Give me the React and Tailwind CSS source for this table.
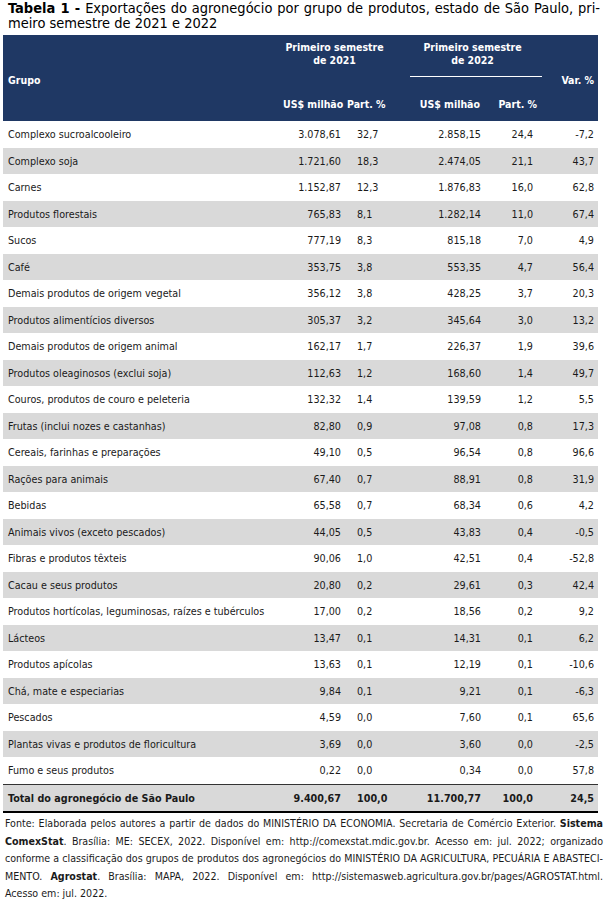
import React from 'react';

const rows = [
  ['Complexo sucroalcooleiro', '3.078,61', '32,7', '2.858,15', '24,4', '-7,2'],
  ['Complexo soja', '1.721,60', '18,3', '2.474,05', '21,1', '43,7'],
  ['Carnes', '1.152,87', '12,3', '1.876,83', '16,0', '62,8'],
  ['Produtos florestais', '765,83', '8,1', '1.282,14', '11,0', '67,4'],
  ['Sucos', '777,19', '8,3', '815,18', '7,0', '4,9'],
  ['Café', '353,75', '3,8', '553,35', '4,7', '56,4'],
  ['Demais produtos de origem vegetal', '356,12', '3,8', '428,25', '3,7', '20,3'],
  ['Produtos alimentícios diversos', '305,37', '3,2', '345,64', '3,0', '13,2'],
  ['Demais produtos de origem animal', '162,17', '1,7', '226,37', '1,9', '39,6'],
  ['Produtos oleaginosos (exclui soja)', '112,63', '1,2', '168,60', '1,4', '49,7'],
  ['Couros, produtos de couro e peleteria', '132,32', '1,4', '139,59', '1,2', '5,5'],
  ['Frutas (inclui nozes e castanhas)', '82,80', '0,9', '97,08', '0,8', '17,3'],
  ['Cereais, farinhas e preparações', '49,10', '0,5', '96,54', '0,8', '96,6'],
  ['Rações para animais', '67,40', '0,7', '88,91', '0,8', '31,9'],
  ['Bebidas', '65,58', '0,7', '68,34', '0,6', '4,2'],
  ['Animais vivos (exceto pescados)', '44,05', '0,5', '43,83', '0,4', '-0,5'],
  ['Fibras e produtos têxteis', '90,06', '1,0', '42,51', '0,4', '-52,8'],
  ['Cacau e seus produtos', '20,80', '0,2', '29,61', '0,3', '42,4'],
  ['Produtos hortícolas, leguminosas, raízes e tubérculos', '17,00', '0,2', '18,56', '0,2', '9,2'],
  ['Lácteos', '13,47', '0,1', '14,31', '0,1', '6,2'],
  ['Produtos apícolas', '13,63', '0,1', '12,19', '0,1', '-10,6'],
  ['Chá, mate e especiarias', '9,84', '0,1', '9,21', '0,1', '-6,3'],
  ['Pescados', '4,59', '0,0', '7,60', '0,1', '65,6'],
  ['Plantas vivas e produtos de floricultura', '3,69', '0,0', '3,60', '0,0', '-2,5'],
  ['Fumo e seus produtos', '0,22', '0,0', '0,34', '0,0', '57,8'],
];

const cols = 'grid grid-cols-[280px_62px_55px_85px_60px_53px]';

function Row({ r, gray, bold }) {
  return (
    <div className={`${cols} h-[26.5px] items-center pt-[2px] ${gray ? 'bg-[#d9d9d9]' : 'bg-white'} ${bold ? 'font-bold' : ''}`}>
      <div className="pl-[5px] whitespace-nowrap">{r[0]}</div>
      <div className="text-right pr-[4px]">{r[1]}</div>
      <div className="pl-[12px]">{r[2]}</div>
      <div className="text-right pr-[4px]">{r[3]}</div>
      <div className="text-right pr-[12px]">{r[4]}</div>
      <div className="text-right pr-[4px]">{r[5]}</div>
    </div>
  );
}

export default function App() {
  return (
    <div className="w-[608px] h-[901px] bg-white text-[#1a1a1a] font-['DejaVu_Sans_Condensed','Liberation_Sans',sans-serif] overflow-hidden">
      <div className="px-[8px] pt-[1px] text-[14.5px] leading-[15px] text-black">
        <div className="text-justify [text-align-last:justify] whitespace-nowrap">
          <span className="font-bold">Tabela 1 -</span> Exportações do agronegócio por grupo de produtos, estado de São Paulo, pri-
        </div>
        <div>meiro semestre de 2021 e 2022</div>
      </div>

      <div className="ml-[3px] w-[595px] mt-[4px] text-[10.7px]">
        <div className={`${cols} grid-rows-[36px_16px_34px] bg-[#1f3864] text-white font-bold leading-[13px] text-[10.5px]`}>
          <div className="row-span-3 self-center pl-[5px] pt-[4px]">Grupo</div>
          <div className="col-span-2 text-center pr-[14px] pt-[6px] whitespace-nowrap">
            Primeiro semestre<br />de 2021
          </div>
          <div className="col-span-2 text-center pt-[6px] whitespace-nowrap">
            Primeiro semestre<br />de 2022
          </div>
          <div className="row-span-3 col-start-6 row-start-1 self-center text-right pr-[4px] pt-[4px]">Var. %</div>
          <div className="col-start-2 col-span-2 row-start-2"></div>
          <div className="col-start-4 col-span-2 row-start-2 pl-[10px] pr-[3px] pt-[5px]">
            <div className="h-px bg-white"></div>
          </div>
          <div className="col-start-2 row-start-3 self-center whitespace-nowrap">US$ milhão</div>
          <div className="col-start-3 row-start-3 self-center pl-[2px] whitespace-nowrap">Part. %</div>
          <div className="col-start-4 row-start-3 self-center text-right pr-[5px] whitespace-nowrap">US$ milhão</div>
          <div className="col-start-5 row-start-3 self-center text-right pr-[8px] whitespace-nowrap">Part. %</div>
        </div>

        {rows.map((r, i) => (
          <Row key={r[0]} r={r} gray={i % 2 === 1} />
        ))}

        <div className="border-t border-[#333] border-b-2 border-b-black">
          <Row r={['Total do agronegócio de São Paulo', '9.400,67', '100,0', '11.700,77', '100,0', '24,5']} gray bold />
        </div>
      </div>

      <div className="px-[5px] pt-[2px] text-[10.6px] leading-[17.5px] text-[#1a1a1a]">
        <div className="text-justify [text-align-last:justify] whitespace-nowrap">
          Fonte: Elaborada pelos autores a partir de dados do MINISTÉRIO DA ECONOMIA. Secretaria de Comércio Exterior. <b>Sistema</b>
        </div>
        <div className="text-justify [text-align-last:justify] whitespace-nowrap">
          <b>ComexStat</b>. Brasília: ME: SECEX, 2022. Disponível em: http://comexstat.mdic.gov.br. Acesso em: jul. 2022; organizado
        </div>
        <div className="text-justify [text-align-last:justify] whitespace-nowrap">
          conforme a classificação dos grupos de produtos dos agronegócios do MINISTÉRIO DA AGRICULTURA, PECUÁRIA E ABASTECI-
        </div>
        <div className="text-justify [text-align-last:justify] whitespace-nowrap">
          MENTO. <b>Agrostat</b>. Brasília: MAPA, 2022. Disponível em: http://sistemasweb.agricultura.gov.br/pages/AGROSTAT.html.
        </div>
        <div>Acesso em: jul. 2022.</div>
      </div>
    </div>
  );
}
